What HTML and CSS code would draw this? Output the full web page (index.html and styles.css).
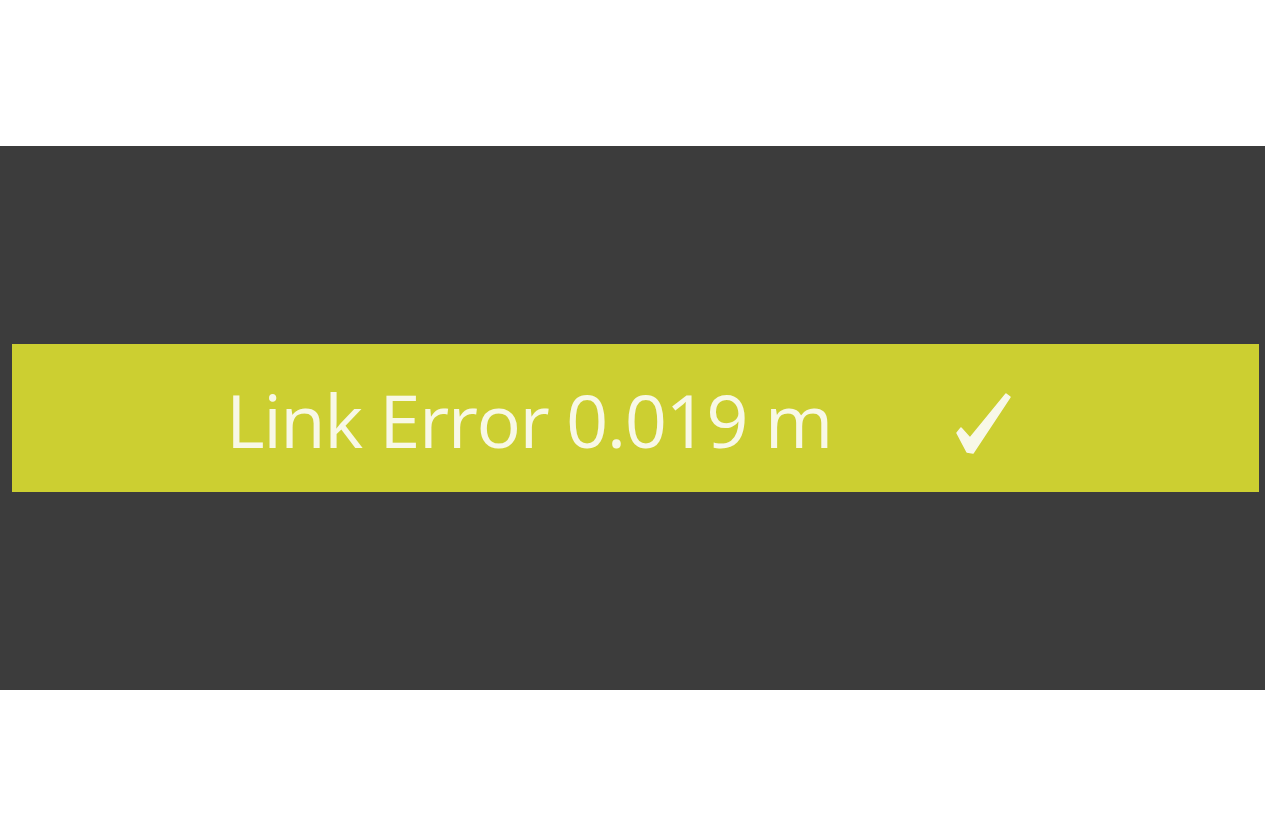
FILE: index.html
```html
<!DOCTYPE html>
<html>
<head>
<meta charset="utf-8">
<link rel="stylesheet" href="styles.css">
</head>
<body>
<div class="top"></div>
<div class="band">
  <div class="bar">
    <span class="label">Link Error 0.019 m</span>
    <svg class="check" width="64" height="68" viewBox="0 0 64 68">
      <path d="M9 39 L18 49 L54 5 L58 8 L21 64 L15 63 L5 44 Z" fill="#f8f8e8" stroke="#f8f8e8" stroke-width="1.5" stroke-linejoin="round"/>
    </svg>
  </div>
</div>
</body>
</html>
```
FILE: styles.css
```css
html, body {
  margin: 0;
  padding: 0;
  background: #ffffff;
}
.top {
  height: 146px;
}
.band {
  height: 544px;
  background: #3c3c3c;
  display: flex;
  align-items: center;
}
.bar {
  margin-left: 12px;
  width: 1247px;
  height: 148px;
  background: #cccf31;
  display: flex;
  align-items: center;
  box-sizing: border-box;
  padding-left: 214px;
}
.label {
  width: 726px;
  flex: none;
  font-family: "Open Sans", "Noto Sans", sans-serif;
  font-size: 74px;
  color: #f8f8e6;
  line-height: 1;
  letter-spacing: -1.5px;
  white-space: nowrap;
  position: relative;
  top: 2px;
}
.check {
  margin-top: 10px;
}
```
